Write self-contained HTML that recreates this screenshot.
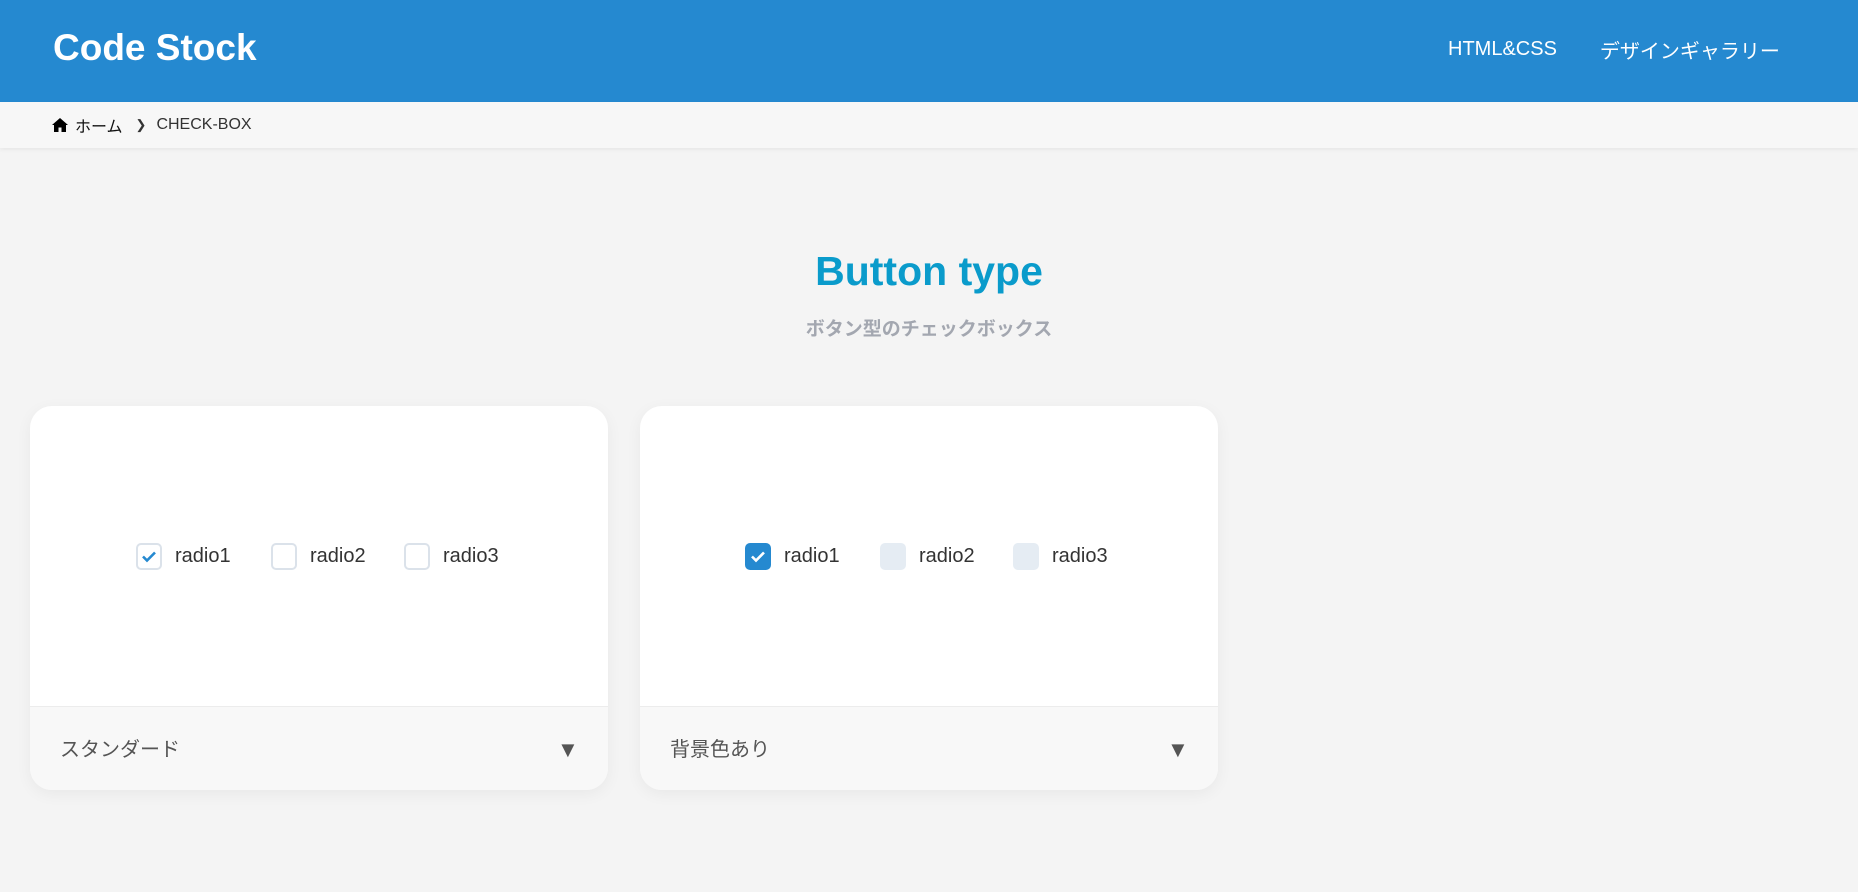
<!DOCTYPE html>
<html><head><meta charset="utf-8"><style>
*{box-sizing:border-box;margin:0;padding:0}
body{width:1858px;height:892px;background:#f4f4f4;font-family:"Liberation Sans","Noto Sans CJK JP",sans-serif;position:relative;overflow:hidden}
.hdr{position:absolute;left:0;top:0;width:1858px;height:102px;background:#2589d0;color:#fff}
.logo{position:absolute;left:53px;top:27px;font-size:37px;font-weight:bold}
.navw{position:absolute;top:0;left:1448px;height:98px;display:flex;align-items:center;font-size:20px}
.bc{position:absolute;top:102px;left:0;width:1858px;height:46px;background:#f7f7f7;box-shadow:0 2px 4px rgba(0,0,0,.05);font-size:16px;color:#333;display:flex;align-items:center;padding-left:52px}
.title{position:absolute;top:248px;left:0;width:1858px;text-align:center;font-size:41px;font-weight:bold;color:#0a9bcb}
.sub{position:absolute;top:314px;left:0;width:1858px;text-align:center;font-size:19px;font-weight:bold;color:#a3a7b0}
.card{position:absolute;top:406px;width:578px;height:384px;background:#fff;border-radius:22px;box-shadow:0 4px 16px rgba(0,0,0,.05);overflow:hidden}
.foot{position:absolute;left:0;bottom:0;width:100%;height:84px;background:#f8f8f8;border-top:1px solid #ececec;font-size:20px;color:#555}
.foot span{position:absolute;left:30px;top:26px}
.foot i{position:absolute;left:527px;top:30px;font-style:normal;font-size:22px;color:#555}
.it{position:absolute;top:137px;height:27px;font-size:20px;color:#333}
.bx{position:absolute;left:0;top:0;width:26px;height:27px;border-radius:5px}
.std{border:2px solid #dbe2ea;background:#fff}
.bg{background:#e5ecf3}
.bgc{background:#2589d0}
.lb{position:absolute;left:39px;top:2px}
</style></head><body>
<div class="hdr"><div class="logo">Code Stock</div>
<div class="navw"><span>HTML&amp;CSS</span><span style="margin-left:43px">デザインギャラリー</span></div></div>
<div class="bc">
<svg width="16" height="14" viewBox="0 0 16 14"><path d="M8 0L0 7h2v7h4.5V9.5h3V14H14V7h2z" fill="#000"/></svg>
<span style="margin-left:7px;color:#111">ホーム</span>
<span style="margin-left:13px;color:#333;font-size:13px">❯</span>
<span style="margin-left:10px">CHECK-BOX</span></div>
<div class="title">Button type</div>
<div class="sub">ボタン型のチェックボックス</div>

<div class="card" style="left:30px">
<div class="it" style="left:106px"><div class="bx std"><svg width="22" height="23" viewBox="0 0 22 23"><path d="M5 11.5l4 4 8-8" stroke="#2589d0" stroke-width="2.6" fill="none"/></svg></div><span class="lb">radio1</span></div>
<div class="it" style="left:241px"><div class="bx std"></div><span class="lb">radio2</span></div>
<div class="it" style="left:374px"><div class="bx std"></div><span class="lb">radio3</span></div>
<div class="foot"><span>スタンダード</span><i>▼</i></div></div>

<div class="card" style="left:640px">
<div class="it" style="left:105px"><div class="bx bgc"><svg width="26" height="27" viewBox="0 0 26 27"><path d="M7 13.5l4 4 8-8" stroke="#fff" stroke-width="2.6" fill="none"/></svg></div><span class="lb">radio1</span></div>
<div class="it" style="left:240px"><div class="bx bg"></div><span class="lb">radio2</span></div>
<div class="it" style="left:373px"><div class="bx bg"></div><span class="lb">radio3</span></div>
<div class="foot"><span>背景色あり</span><i>▼</i></div></div>
</body></html>
